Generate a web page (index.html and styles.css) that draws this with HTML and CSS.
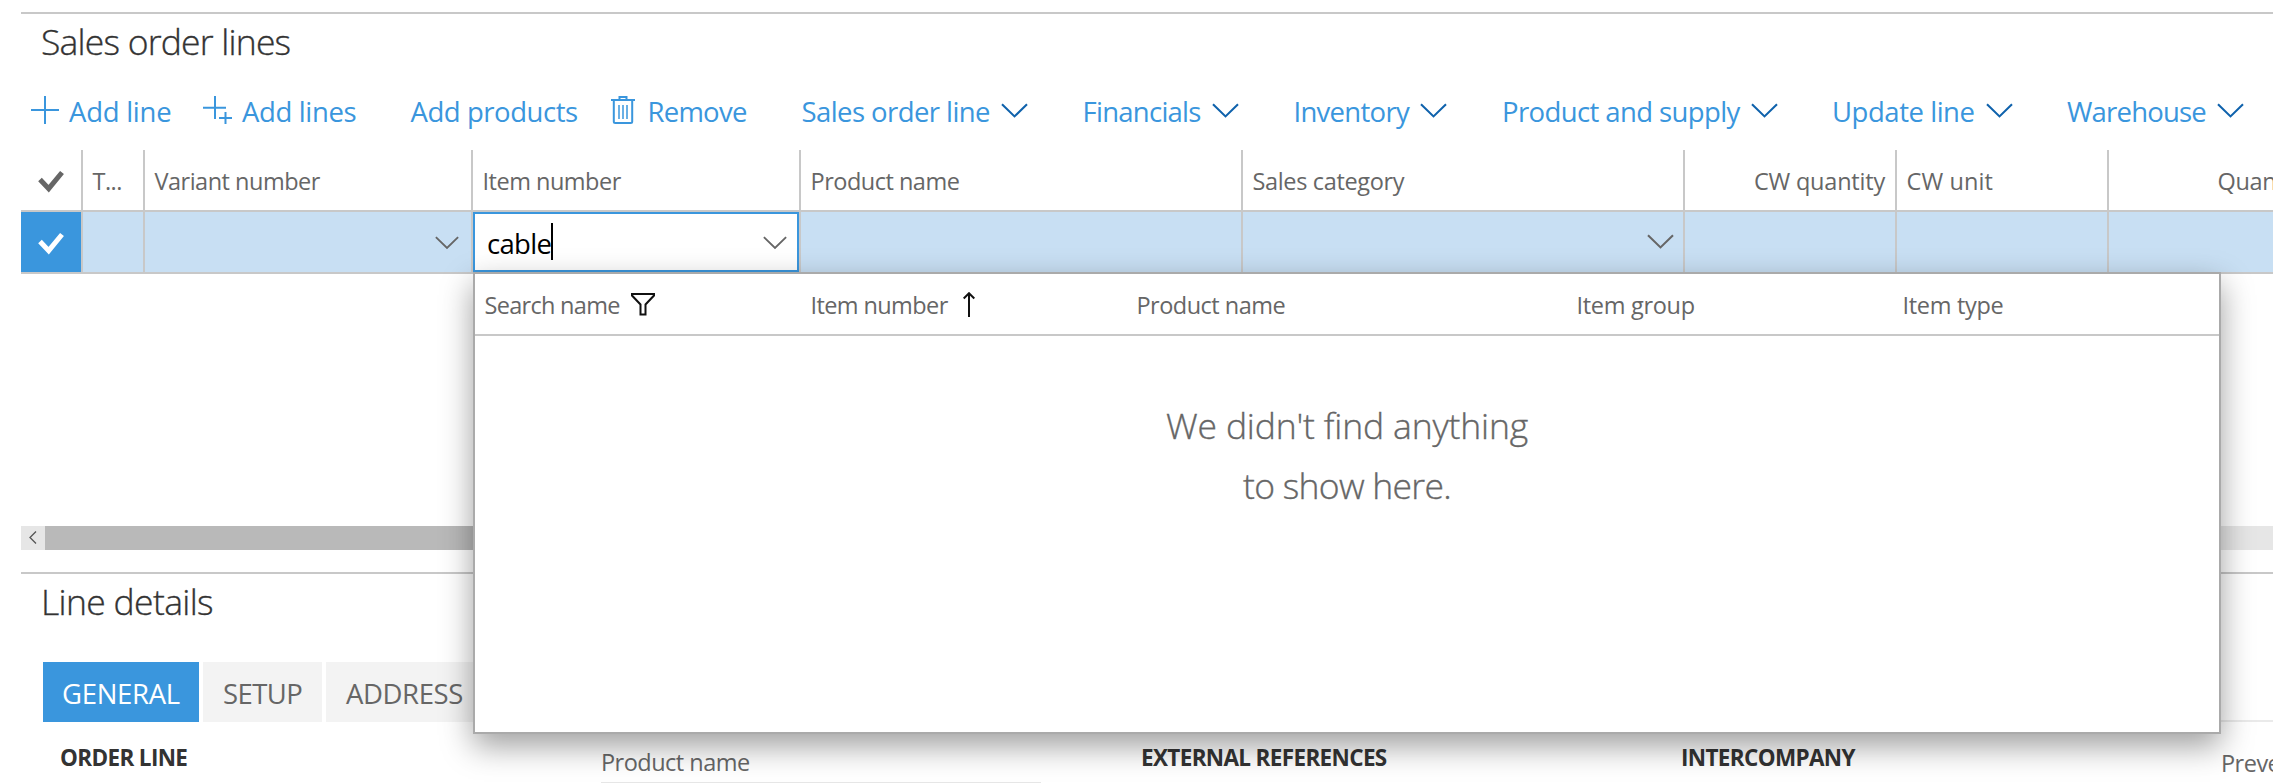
FILE: index.html
```
<!DOCTYPE html>
<html lang="en">
<head>
<meta charset="utf-8">
<title>Sales order lines</title>
<link rel="stylesheet" href="styles.css">
</head>
<body>
<svg class="defs" width="0" height="0">
  <symbol id="chevron" viewBox="0 0 27 15"><path d="M1 1.2 13.5 13.4 26 1.2" fill="none" stroke="currentColor" stroke-width="2.1"/></symbol>
  <symbol id="check" viewBox="0 0 26 23"><path d="M2 9.5 10.7 18.7 24 2.5" fill="none" stroke="currentColor" stroke-width="5"/></symbol>
</svg>
<main class="page">
  <section class="lines">
    <h2 class="title title-lines">Sales order lines</h2>
    <nav class="toolbar">
      <a class="action"><svg class="icon" width="28" height="28"><path d="M0 14H28M14 0V28"/></svg><span class="t-add">Add line</span></a>
      <a class="action"><svg class="icon" width="29" height="28"><path d="M0 11.7H23M12 0V23M16 22H29M22.5 16V28"/></svg><span class="t-lines">Add lines</span></a>
      <a class="action"><span class="t-prod">Add products</span></a>
      <a class="action remove"><svg class="icon" width="24" height="28"><path d="M0 4H24M8.500 4V1H15.500V4M2.800 4V25.500Q2.800 27 4.300 27H19.700Q21.200 27 21.200 25.500V4"/><path class="thin" d="M8 9V23M12 9V23M16 9V23"/></svg><span class="t-remove">Remove</span></a>
      <a class="action"><span class="t-sales">Sales order line</span><svg class="chev"><use href="#chevron"/></svg></a>
      <a class="action"><span class="t-fin">Financials</span><svg class="chev"><use href="#chevron"/></svg></a>
      <a class="action"><span class="t-inv">Inventory</span><svg class="chev"><use href="#chevron"/></svg></a>
      <a class="action"><span class="t-supply">Product and supply</span><svg class="chev"><use href="#chevron"/></svg></a>
      <a class="action"><span class="t-update">Update line</span><svg class="chev"><use href="#chevron"/></svg></a>
      <a class="action"><span class="t-ware">Warehouse</span><svg class="chev"><use href="#chevron"/></svg></a>
    </nav>
    <div class="grid grid-head">
      <div class="cell mark"><svg class="check"><use href="#check"/></svg></div>
      <div class="cell">T...</div>
      <div class="cell">Variant number</div>
      <div class="cell">Item number</div>
      <div class="cell">Product name</div>
      <div class="cell h-cat">Sales category</div>
      <div class="cell num h-cw">CW quantity</div>
      <div class="cell h-unit">CW unit</div>
      <div class="cell num h-qty">Quantity</div>
    </div>
    <div class="grid grid-row">
      <div class="cell mark selected"><svg class="check"><use href="#check"/></svg></div>
      <div class="cell"></div>
      <div class="cell drop"><svg class="chev small"><use href="#chevron"/></svg></div>
      <div class="cell editing"><div class="input"><span class="value">cable</span><svg class="chev small"><use href="#chevron"/></svg></div></div>
      <div class="cell"></div>
      <div class="cell drop wide"><svg class="chev"><use href="#chevron"/></svg></div>
      <div class="cell"></div>
      <div class="cell"></div>
      <div class="cell"></div>
    </div>
    <div class="scrollbar"><div class="scroll-btn"><svg width="8" height="13"><path d="M7 .5 1 6.500 7 12.500" fill="none" stroke="#555" stroke-width="1.300"/></svg></div><div class="thumb"></div></div>
  </section>
  <section class="details">
    <h2 class="title title-details">Line details</h2>
    <div class="tabs">
      <div class="tab active">GENERAL</div>
      <div class="tab setup">SETUP</div>
      <div class="tab address">ADDRESS</div>
      <div class="tab-rule"></div>
    </div>
    <div class="fields">
      <h3>ORDER LINE</h3>
      <div class="field">Product name</div>
      <h3>EXTERNAL REFERENCES</h3>
      <h3>INTERCOMPANY</h3>
      <div class="field last">Prevent</div>
    </div>
  </section>
  <div class="popup">
    <div class="popup-head">
      <div class="p-search"><span>Search name</span><svg width="24" height="23"><path d="M1 1H23V2.500L14.500 11.500V21.500H9.500V11.500L1 2.500Z"/></svg></div>
      <div class="p-item"><span>Item number</span><svg width="12" height="25"><path d="M6 1.500V25M.7 6.500 6 1.200 11.300 6.500"/></svg></div>
      <div>Product name</div>
      <div class="p-group">Item group</div>
      <div class="p-group">Item type</div>
    </div>
    <div class="empty"><span class="e-first">We didn't find anything</span><br><span class="e-second">to show here.</span></div>
  </div>
</main>
</body>
</html>
```
FILE: styles.css
```
* { box-sizing: border-box; }
body { margin: 0; background: #fff; font-family: "Open Sans", "Noto Sans", sans-serif; }
svg { display: block; flex: none; }
.defs { position: absolute; }
.page { position: relative; width: 2273px; height: 783px; overflow: hidden; padding: 12px 0 0 21px; }

.lines { height: 560px; border-top: 2px solid #c8c8c8; }
.title { margin: 0; padding-left: 20px; font-size: 35.500px; line-height: 50px; font-weight: 300; color: #333; white-space: nowrap; -webkit-text-stroke: .35px currentColor; }
.title-lines { padding-top: 2px; letter-spacing: -.79px; }
.title-details { padding-top: 2px; letter-spacing: -.66px; }

.toolbar { display: grid; grid-template-columns: 172px 207.500px 200px 191px 281px 211px 208.500px 330px 235px 200px; padding: 25px 0 0 10px; height: 84px; }
.action { display: flex; align-items: flex-start; height: 40px; font-size: 27.500px; line-height: 40px; color: #3a96dd; white-space: nowrap; }
.action span { margin-top: 1px; }
.action .icon { margin: 5px 10px 0 0; fill: none; stroke: #3a96dd; stroke-width: 2; }
.icon .thin { stroke-width: 1.500; }
.action.remove .icon { margin-right: 13px; }
.chev { width: 27px; height: 15px; color: #0f62ac; }
.chev.small { width: 24px; height: 13.500px; }
.action .chev { margin: 12px 0 0 11px; }
.t-add { letter-spacing: -.25px; }
.t-lines { letter-spacing: -.36px; }
.t-prod { letter-spacing: -.44px; }
.t-remove { letter-spacing: -.75px; }
.t-sales { letter-spacing: -.57px; }
.t-fin { letter-spacing: -.74px; }
.t-inv { letter-spacing: -.72px; }
.t-supply { letter-spacing: -.6px; }
.t-update { letter-spacing: -.46px; }
.t-ware { letter-spacing: -.8px; }

.grid { display: grid; grid-template-columns: 62px 62px 328px 328px 442px 442px 212px 212px 212px; width: 2300px; height: 62px; border-bottom: 2px solid #c8c8c8; }
.cell { border-right: 2px solid #c8c8c8; }
.grid-head { color: #666; font-size: 23.500px; line-height: 60px; letter-spacing: -.5px; white-space: nowrap; }
.grid-head .cell { padding: 1px 10px 0 9.500px; height: 60px; }
.grid-head .num { text-align: right; }
.grid-head .h-cat { letter-spacing: -.34px; }
.grid-head .h-cw { letter-spacing: -.2px; }
.grid-head .h-qty { letter-spacing: -.4px; }
.grid-head .h-unit { letter-spacing: .1px; }
.grid .mark { padding: 20px 0 0 17px; }
.check { width: 26px; height: 23px; }
.grid-row { background: #c8dff3; }
.grid-row .selected { background: #3a96dd; background-clip: padding-box; color: #fff; }
.grid-head .check { color: #666; }
.drop { display: flex; justify-content: flex-end; padding: 24px 12px 0 0; }
.drop.wide { padding: 22px 9px 0 0; }
.grid-row .chev { color: #666; }
.input { display: flex; justify-content: space-between; height: 60px; border: 2px solid #3a96dd; background: #fff; padding: 0 10px 0 12px; }
.input .chev { margin-top: 22px; }
.value { height: 37px; margin-top: 9px; border-right: 2px solid #000; font-size: 27.500px; line-height: 42px; letter-spacing: -.7px; color: #000; }

.scrollbar { display: flex; height: 24px; margin-top: 252px; background: #e6e6e6; }
.scroll-btn { width: 24px; padding: 5px 0 0 8px; }
.thumb { width: 1300px; background: #b9b9b9; }

.details { border-top: 2px solid #c8c8c8; }
.tabs { display: flex; gap: 4px; margin: 36px 0 0 22px; font-size: 27.500px; line-height: 63px; }
.tab { height: 60px; width: 156px; padding-left: 19px; background: #f3f3f3; color: #666; letter-spacing: -.3px; }
.tab.active { background: #3a96dd; color: #fff; }
.tab.setup { width: 119px; padding-left: 20px; letter-spacing: -.6px; }
.tab.address { width: 170px; padding-left: 20px; letter-spacing: -.4px; }
.tab-rule { flex: 1; border-bottom: 2px solid #eaeaea; }
.fields { display: grid; grid-template-columns: repeat(5, 540px); padding: 20px 0 0 40px; }
.fields h3 { margin: 0; padding-top: 1px; font-size: 22.500px; line-height: 30px; font-weight: 700; letter-spacing: -.65px; color: #333; }
.fields h3:first-child { margin-left: -1px; }
.field { width: 440px; height: 41px; padding-top: 5px; border-bottom: 1px solid #e6e6e6; font-size: 23.500px; line-height: 30px; letter-spacing: -.52px; color: #666; }
.field.last { padding-top: 6px; border-bottom: 0; }

.popup { position: absolute; left: 473px; top: 272px; width: 1748px; height: 462px; border: 2px solid #aaa; background: #fff; box-shadow: 0 12px 30px rgba(0, 0, 0, .38); }
.popup-head { display: grid; grid-template-columns: 326px 326px 440px 326px 326px; height: 62px; padding: 1px 0 0 9.500px; border-bottom: 2px solid #c8c8c8; font-size: 23.500px; line-height: 60px; letter-spacing: -.52px; color: #666; white-space: nowrap; }
.popup-head svg { fill: none; stroke: #111; stroke-width: 2; }
.p-search, .p-item { display: flex; }
.p-search { letter-spacing: -.7px; }
.p-search svg { margin: 18px 0 0 11px; }
.p-item { letter-spacing: -.6px; }
.p-item svg { margin: 17px 0 0 15px; }
.p-group { letter-spacing: -.3px; }
.empty { padding-top: 59px; text-align: center; font-size: 35.500px; line-height: 60px; font-weight: 300; color: #666; -webkit-text-stroke: .35px currentColor; }
.e-first { letter-spacing: -.17px; }
.e-second { letter-spacing: -.72px; }
```
